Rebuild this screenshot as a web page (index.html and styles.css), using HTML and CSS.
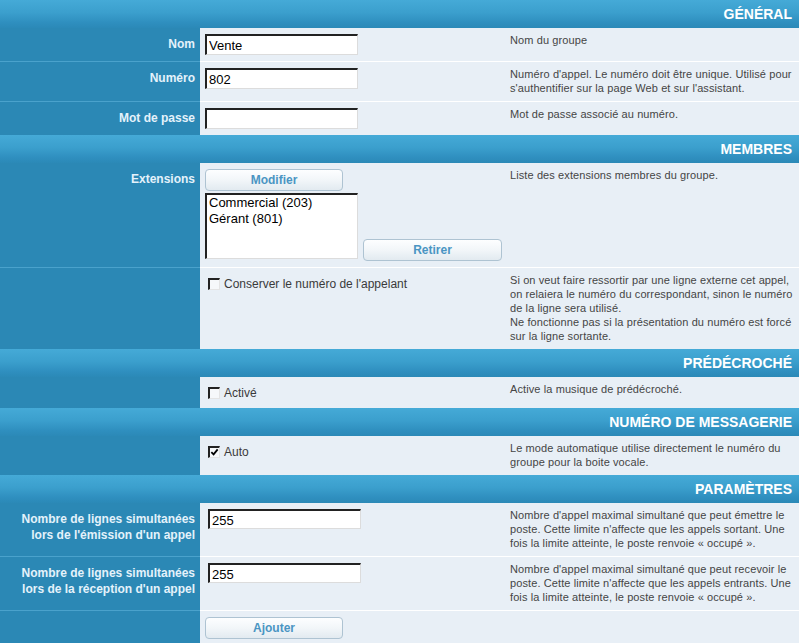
FILE: index.html
```html
<!DOCTYPE html>
<html lang="fr">
<head>
<meta charset="utf-8">
<title>Groupe</title>
<link rel="stylesheet" href="styles.css">
</head>
<body>
<div class="form">
  <div class="section-head">GÉNÉRAL</div>
  <div class="row">
    <div class="label">Nom</div>
    <div class="field"><input class="text" type="text" value="Vente"></div>
    <div class="desc">Nom du groupe</div>
  </div>
  <div class="row">
    <div class="label">Numéro</div>
    <div class="field"><input class="text" type="text" value="802"></div>
    <div class="desc">Numéro d'appel. Le numéro doit être unique. Utilisé pour<br>s'authentifier sur la page Web et sur l'assistant.</div>
  </div>
  <div class="row">
    <div class="label">Mot de passe</div>
    <div class="field"><input class="text" type="password" value=""></div>
    <div class="desc">Mot de passe associé au numéro.</div>
  </div>

  <div class="section-head">MEMBRES</div>
  <div class="row">
    <div class="label">Extensions</div>
    <div class="field">
      <button class="btn" type="button">Modifier</button>
      <div class="list-line">
        <div class="listbox">
          <div>Commercial (203)</div>
          <div>Gérant (801)</div>
        </div>
        <button class="btn btn-right" type="button">Retirer</button>
      </div>
    </div>
    <div class="desc">Liste des extensions membres du groupe.</div>
  </div>
  <div class="row">
    <div class="label"></div>
    <div class="field">
      <label class="check"><span class="box"></span><span>Conserver le numéro de l'appelant</span></label>
    </div>
    <div class="desc">Si on veut faire ressortir par une ligne externe cet appel,<br>on relaiera le numéro du correspondant, sinon le numéro<br>de la ligne sera utilisé.<br>Ne fonctionne pas si la présentation du numéro est forcé<br>sur la ligne sortante.</div>
  </div>

  <div class="section-head">PRÉDÉCROCHÉ</div>
  <div class="row">
    <div class="label"></div>
    <div class="field">
      <label class="check"><span class="box"></span><span>Activé</span></label>
    </div>
    <div class="desc">Active la musique de prédécroché.</div>
  </div>

  <div class="section-head">NUMÉRO DE MESSAGERIE</div>
  <div class="row">
    <div class="label"></div>
    <div class="field">
      <label class="check"><span class="box checked"><svg viewBox="0 0 10 10" width="10" height="10"><path d="M1.5 4.5 L4 7 L8.5 1.5" fill="none" stroke="#000" stroke-width="2"/></svg></span><span>Auto</span></label>
    </div>
    <div class="desc">Le mode automatique utilise directement le numéro du<br>groupe pour la boite vocale.</div>
  </div>

  <div class="section-head">PARAMÈTRES</div>
  <div class="row">
    <div class="label">Nombre de lignes simultanées<br>lors de l'émission d'un appel</div>
    <div class="field"><input class="text text-param" type="text" value="255"></div>
    <div class="desc">Nombre d'appel maximal simultané que peut émettre le<br>poste. Cette limite n'affecte que les appels sortant. Une<br>fois la limite atteinte, le poste renvoie « occupé ».</div>
  </div>
  <div class="row">
    <div class="label">Nombre de lignes simultanées<br>lors de la réception d'un appel</div>
    <div class="field"><input class="text text-param" type="text" value="255"></div>
    <div class="desc">Nombre d'appel maximal simultané que peut recevoir le<br>poste. Cette limite n'affecte que les appels entrants. Une<br>fois la limite atteinte, le poste renvoie « occupé ».</div>
  </div>
  <div class="row">
    <div class="label"></div>
    <div class="field"><button class="btn" type="button">Ajouter</button></div>
    <div class="desc"></div>
  </div>
</div>
</body>
</html>
```

FILE: styles.css
```css
html, body {
  margin: 0;
  padding: 0;
  background: #e8eff6;
}
body {
  font-family: "Liberation Sans", Arial, sans-serif;
  width: 799px;
  height: 643px;
  overflow: hidden;
}
.form {
  width: 799px;
}
.section-head {
  height: 28px;
  line-height: 29px;
  text-align: right;
  padding-right: 7px;
  font-size: 14px;
  font-weight: bold;
  color: #ffffff;
  background: linear-gradient(to bottom, #45aad7 0%, #3b9fcd 45%, #2f8fbf 80%, #2b89b7 100%);
}
.row {
  display: grid;
  grid-template-columns: 200px 305px 1fr;
}
.label {
  background: #2b88b5;
  color: #e4f2fb;
  font-size: 12px;
  font-weight: bold;
  line-height: 16px;
  text-align: right;
  padding: 8px 5px 0 0;
  white-space: nowrap;
}
.field {
  background: #e8eff6;
  padding: 6px 0 6px 5px;
}
.desc {
  background: #e8eff6;
  color: #454545;
  font-size: 11px;
  line-height: 14px;
  padding: 5px 6px 6px 5px;
  white-space: nowrap;
  letter-spacing: 0.1px;
}
.row + .row > .label {
  border-top: 1px solid #4aa2cc;
}
.row + .row > .field,
.row + .row > .desc {
  border-top: 1px solid #ffffff;
}
.text {
  display: block;
  box-sizing: border-box;
  width: 153px;
  height: 21px;
  margin: 0;
  padding: 1px 2px 0;
  font-family: "Liberation Sans", Arial, sans-serif;
  font-size: 13px;
  color: #000;
  background: #ffffff;
  border-style: solid;
  border-width: 2px 1px 1px 2px;
  border-color: #222 #dcdcdc #dcdcdc #222;
  outline: none;
}
.text-param {
  margin-left: 3px;
  height: 20px;
}
.btn {
  display: block;
  box-sizing: border-box;
  width: 138px;
  height: 22px;
  margin: 0;
  padding: 0;
  border: 1px solid #aec3d2;
  border-radius: 4px;
  background: linear-gradient(to bottom, #fdfeff 0%, #f2f6f9 50%, #e2eaf0 100%);
  font-family: "Liberation Sans", Arial, sans-serif;
  font-size: 12px;
  font-weight: bold;
  color: #4a95c3;
  cursor: pointer;
}
.list-line {
  display: flex;
  align-items: flex-start;
  margin-top: 2px;
}
.listbox {
  box-sizing: border-box;
  width: 153px;
  height: 66px;
  margin-bottom: 2px;
  background: #fff;
  border-style: solid;
  border-width: 2px 1px 1px 2px;
  border-color: #222 #dcdcdc #dcdcdc #222;
  font-size: 13px;
  line-height: 16px;
  color: #000;
  padding: 0 2px;
}
.btn-right {
  width: 139px;
  margin-left: 5px;
  align-self: flex-end;
}
.check {
  display: flex;
  align-items: center;
  height: 19px;
  margin-left: 3px;
  font-size: 12px;
  color: #3a3a3a;
}
.box {
  box-sizing: border-box;
  width: 12px;
  height: 12px;
  margin-right: 4px;
  background: #f6f8fa;
  border-style: solid;
  border-width: 2px 1px 1px 2px;
  border-color: #222 #e4e4e4 #e4e4e4 #222;
  display: flex;
  align-items: center;
  justify-content: center;
}
.box svg {
  display: block;
  width: 9px;
  height: 9px;
}
```
